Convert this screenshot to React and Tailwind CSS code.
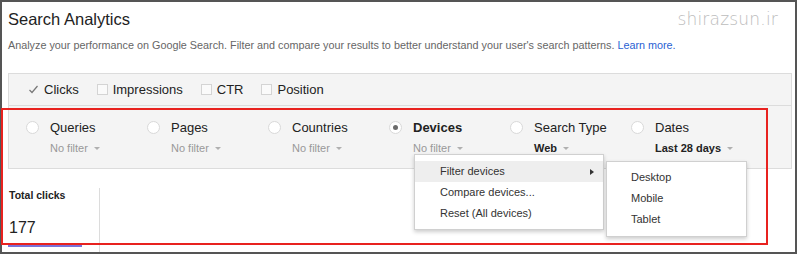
const Radio = ({ checked }) => (
  <span className="mt-[1px] flex h-[13px] w-[13px] shrink-0 items-center justify-center rounded-full border border-[#d9d9d9] bg-white">
    {checked && <span className="h-[5px] w-[5px] rounded-full bg-[#6b6b6b]" />}
  </span>
);

const Caret = () => (
  <span className="ml-[6px] inline-block h-0 w-0 border-x-[3px] border-t-[3px] border-x-transparent border-t-[#b0b0b0] align-middle" />
);

const Dimension = ({ label, sub, checked, bold }) => (
  <div className="flex w-[121px] shrink-0 items-start gap-[11px]">
    <Radio checked={checked} />
    <div className="flex flex-col">
      <span className={`text-[13px] leading-[16px] text-[#222] ${checked ? 'font-bold' : ''}`}>{label}</span>
      <span className={`mt-[5px] flex items-center text-[11px] leading-[14px] ${bold ? 'font-bold text-[#222]' : 'text-[#999]'}`}>
        {sub}
        <Caret />
      </span>
    </div>
  </div>
);

const Metric = ({ label, checked }) => (
  <div className="flex items-center gap-[5px]">
    {checked ? (
      <svg width="11" height="11" viewBox="0 0 11 11" className="shrink-0">
        <path d="M1.5 6 L4 8.5 L9.5 2" fill="none" stroke="#777" strokeWidth="1.2" />
      </svg>
    ) : (
      <span className="h-[11px] w-[11px] shrink-0 border border-[#d4d4d4] bg-[#fafafa]" />
    )}
    <span className="text-[13px] text-[#222]">{label}</span>
  </div>
);

export default function App() {
  return (
    <div className="relative h-[256px] w-[797px] overflow-hidden bg-white font-['Liberation_Sans',Arial,sans-serif]">
      <div className="flex h-[254px] flex-col border-2 border-[#555] pl-[6px] pr-[3px]">
        <div className="mt-[7px] flex h-[20px] items-center justify-between">
          <h1 className="text-[16.5px] leading-[20px] text-[#222]">Search Analytics</h1>
          <span className="mr-[14px] font-['DejaVu_Sans',sans-serif] text-[17px] font-light leading-[20px] tracking-[0.2px] text-[#bcbcbc]">
            shirazsun.ir
          </span>
        </div>
        <p className="mt-[9px] text-[10.8px] leading-[14px] text-[#666]">
          Analyze your performance on Google Search. Filter and compare your results to better understand your user's search patterns.{' '}
          <span className="text-[#2a5fd3]">Learn more.</span>
        </p>

        <div className="mt-[21px] border border-b-0 border-[#dcdcdc] bg-[#f4f4f4]">
          <div className="flex h-[32px] items-center gap-[18px] border-b border-[#dcdcdc] pl-[19px]">
            <Metric label="Clicks" checked />
            <Metric label="Impressions" />
            <Metric label="CTR" />
            <Metric label="Position" />
          </div>
          <div className="flex border-b border-[#dcdcdc] pb-[13px] pl-[17px] pt-[14px]">
            <Dimension label="Queries" sub="No filter" />
            <Dimension label="Pages" sub="No filter" />
            <Dimension label="Countries" sub="No filter" />
            <Dimension label="Devices" sub="No filter" checked />
            <Dimension label="Search Type" sub="Web" bold />
            <Dimension label="Dates" sub="Last 28 days" bold />
          </div>
        </div>

        <div className="flex flex-1">
          <div className="mt-[19px] flex w-[92px] flex-col border-r border-[#dcdcdc] pl-[1px]">
            <span className="mt-[1px] text-[10.5px] font-bold leading-[13px] text-[#222]">Total clicks</span>
            <span className="mt-[16px] text-[16px] leading-[20px] text-[#222]">177</span>
          </div>
        </div>
      </div>

      <div className="absolute left-[8px] top-[245px] h-[2px] w-[74px] bg-[#7a72d8]" />

      <div className="absolute left-[414px] top-[154px] w-[190px] border border-[#d0d0d0] bg-white pb-[5px] pt-[6px] text-[11px] text-[#333] shadow-[0_2px_4px_rgba(0,0,0,0.2)]">
        <div className="flex h-[21px] items-center justify-between bg-[#eeeeee] pl-[25px] pr-[9px]">
          <span>Filter devices</span>
          <span className="h-0 w-0 border-y-[3px] border-l-[4px] border-y-transparent border-l-[#333]" />
        </div>
        <div className="flex h-[21px] items-center pl-[25px]">Compare devices...</div>
        <div className="flex h-[21px] items-center pl-[25px]">Reset (All devices)</div>
      </div>

      <div className="absolute left-[606px] top-[161px] w-[141px] border border-[#d0d0d0] bg-white pb-[6px] pt-[5px] text-[11px] text-[#333] shadow-[0_2px_4px_rgba(0,0,0,0.2)]">
        <div className="flex h-[21px] items-center pl-[24px]">Desktop</div>
        <div className="flex h-[21px] items-center pl-[24px]">Mobile</div>
        <div className="flex h-[21px] items-center pl-[24px]">Tablet</div>
      </div>

      <div className="pointer-events-none absolute left-[1px] top-[108px] h-[137px] w-[767px] border-2 border-[#e8221f]" />
    </div>
  );
}
